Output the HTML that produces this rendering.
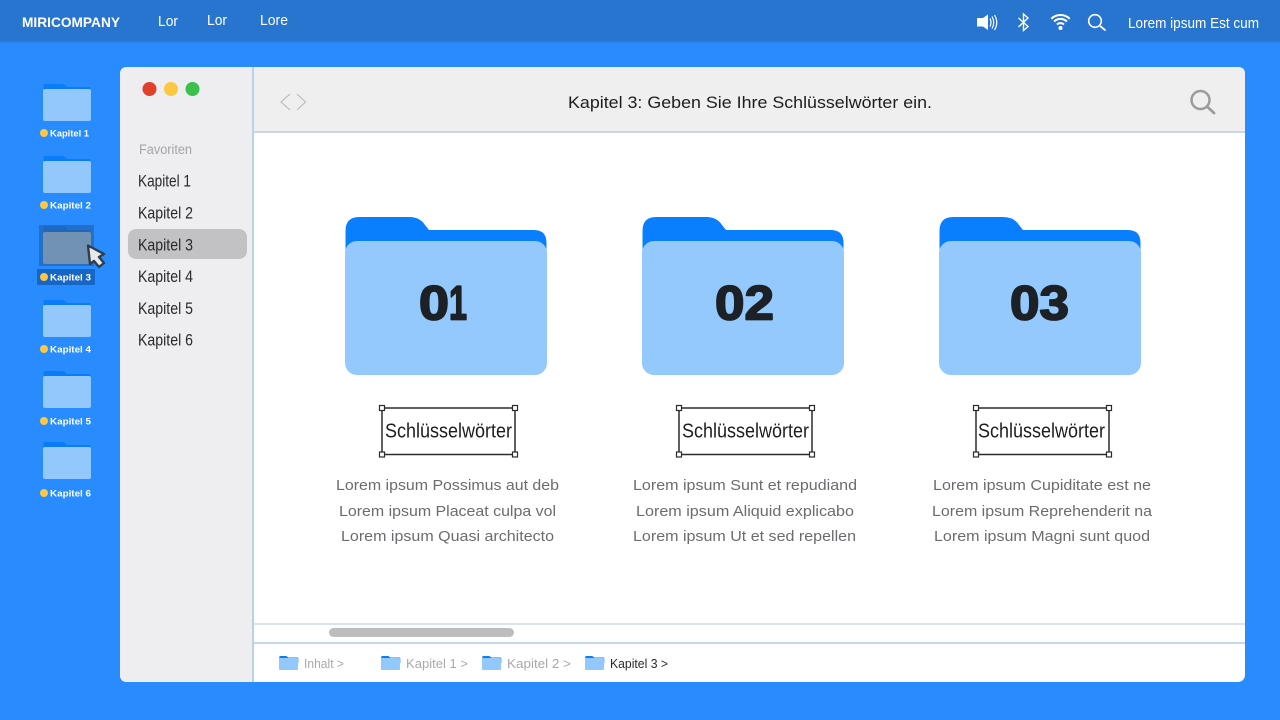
<!DOCTYPE html>
<html lang="de">
<head>
<meta charset="utf-8">
<title>Kapitel 3</title>
<style>
html,body{margin:0;padding:0;width:1280px;height:720px;overflow:hidden;background:#288cfe}
svg{display:block}
text{font-family:"Liberation Sans",sans-serif}
</style>
</head>
<body>
<svg width="1280" height="720" viewBox="0 0 1280 720" xmlns="http://www.w3.org/2000/svg">
<defs>
<g id="sf">
<path d="M0.500 12V2.500q0-1.500 1.500-1.500h17q2 0 3.500 1.500L24 4h22q1.500 0 1.500 1.500V12z" fill="#0a7cf8"/>
<rect x="0" y="6" width="48" height="32" rx="2" fill="#93c8fc"/>
</g>
<g id="mf">
<path d="M0.500 60V14Q0.500 0 14 0H64Q75 0 80 8L84 13H189Q201.500 13 201.500 26V60z" fill="#0a7ffe"/>
<rect x="0" y="24" width="202" height="134" rx="12" fill="#93c9fc"/>
</g>
<g id="tf">
<path d="M0.300 8V2q0-1 1-1h6l2 1.500h9q1 0 1 1V8z" fill="#0a7cf8"/>
<rect x="0" y="3" width="19" height="12" rx="1" fill="#93c8fc"/>
</g>
<g id="kw" fill="none">
<rect x="0" y="0" width="133" height="46.500" stroke="#2b2b2b" stroke-width="1.500"/>
<g fill="#fff" stroke="#2b2b2b" stroke-width="1.200">
<rect x="-2.500" y="-2.500" width="5" height="5"/><rect x="130.500" y="-2.500" width="5" height="5"/>
<rect x="-2.500" y="44" width="5" height="5"/><rect x="130.500" y="44" width="5" height="5"/>
</g>
</g>
</defs>

<rect width="1280" height="720" fill="#288cfe"/>
<!-- top bar -->
<rect width="1280" height="41" fill="#2875d0"/>
<rect y="41" width="1280" height="2" fill="#2681ea"/>
<text x="22" y="27" font-size="14" font-weight="700" fill="#fff" textLength="98" lengthAdjust="spacingAndGlyphs">MIRICOMPANY</text>
<text x="158" y="26" font-size="15" fill="#fff" textLength="20" lengthAdjust="spacingAndGlyphs">Lor</text>
<text x="207" y="25" font-size="15" fill="#fff" textLength="20" lengthAdjust="spacingAndGlyphs">Lor</text>
<text x="260" y="25" font-size="15" fill="#fff" textLength="28" lengthAdjust="spacingAndGlyphs">Lore</text>
<!-- status icons -->
<path d="M977 18H983L988 14.500V30L983 26.500H977z" fill="#fff"/>
<path d="M990 18.500Q992 22.500 990 26.500M992 16.500Q995.500 22.500 992 28.500M994.500 15Q999 22.500 994.500 30" fill="none" stroke="#fff" stroke-width="1.200"/>
<path d="M1018.500 18L1028 26.500L1023.500 30.500V14L1028 18L1018.500 27" fill="none" stroke="#fff" stroke-width="1.400"/>
<path d="M1051.300 18.800A13 13 0 0 1 1069.700 18.800M1054.100 21.600A9 9 0 0 1 1066.900 21.600M1057 24.500A5 5 0 0 1 1064 24.500" fill="none" stroke="#fff" stroke-width="2"/>
<circle cx="1060.500" cy="28" r="2" fill="#fff"/>
<circle cx="1095" cy="21" r="6.300" fill="none" stroke="#fff" stroke-width="1.600"/>
<path d="M1099.800 25.800L1105 30" stroke="#fff" stroke-width="1.800" stroke-linecap="round"/>
<text x="1128" y="28" font-size="15" fill="#fff" textLength="131" lengthAdjust="spacingAndGlyphs">Lorem ipsum Est cum</text>

<!-- desktop folders -->
<g font-size="9.500" font-weight="700" fill="#fff">
<use href="#sf" x="43" y="83"/><circle cx="44" cy="133" r="4" fill="#fcc741"/><text x="50" y="136.500" textLength="39" lengthAdjust="spacingAndGlyphs">Kapitel 1</text>
<use href="#sf" x="43" y="155"/><circle cx="44" cy="205" r="4" fill="#fcc741"/><text x="50" y="208.500" textLength="41" lengthAdjust="spacingAndGlyphs">Kapitel 2</text>
<rect x="39" y="225" width="55" height="41" fill="#2470c6"/>
<path d="M43.500 240V228q0-2 2-2h17q2 0 3.500 1.500L68 230h21q1.500 0 1.500 1.500V240z" fill="#1e68bf"/>
<rect x="43" y="232" width="48" height="32" rx="2" fill="#7292b4"/>
<rect x="37" y="269" width="58" height="16" fill="#1766c4"/>
<circle cx="44" cy="277" r="4" fill="#fcc741"/><text x="50" y="280.500" textLength="41" lengthAdjust="spacingAndGlyphs">Kapitel 3</text>
<use href="#sf" x="43" y="299"/><circle cx="44" cy="349" r="4" fill="#fcc741"/><text x="50" y="352.500" textLength="41" lengthAdjust="spacingAndGlyphs">Kapitel 4</text>
<use href="#sf" x="43" y="370"/><circle cx="44" cy="421" r="4" fill="#fcc741"/><text x="50" y="424.500" textLength="41" lengthAdjust="spacingAndGlyphs">Kapitel 5</text>
<use href="#sf" x="43" y="441"/><circle cx="44" cy="493" r="4" fill="#fcc741"/><text x="50" y="496.500" textLength="41" lengthAdjust="spacingAndGlyphs">Kapitel 6</text>
</g>
<!-- cursor -->
<path d="M88 245.500L104 254L99 257L104 263L99 267L94 261L90 264z" fill="#e8e8e8" stroke="#2d3e4e" stroke-width="2.400" stroke-linejoin="round"/>

<!-- window -->
<rect x="120" y="67" width="1125" height="615" rx="7" fill="#fff"/>
<path d="M252 67H127Q120 67 120 74V675Q120 682 127 682H252z" fill="#eeeef0"/>
<rect x="252" y="67" width="2" height="615" fill="#b9d1ec"/>
<path d="M254 67H1238Q1245 67 1245 74V131H254z" fill="#efefef"/>
<rect x="254" y="131" width="991" height="2" fill="#c9d6ea"/>
<circle cx="149.500" cy="89" r="7" fill="#e0402c"/>
<circle cx="171" cy="89" r="7" fill="#fcc741"/>
<circle cx="192.500" cy="89" r="7" fill="#39c14a"/>
<path d="M290 94L281 102L290 110M297 94L305.500 102L297 110" fill="none" stroke="#b5b5b5" stroke-width="1"/>
<text x="568" y="108" font-size="17" fill="#1d1d1f" textLength="364" lengthAdjust="spacingAndGlyphs">Kapitel 3: Geben Sie Ihre Schlüsselwörter ein.</text>
<circle cx="1200.500" cy="100" r="9" fill="none" stroke="#9b9b9b" stroke-width="2.500"/>
<path d="M1207 106.500L1214 113" stroke="#9b9b9b" stroke-width="2.800" stroke-linecap="round"/>

<!-- sidebar -->
<text x="139" y="154" font-size="13.500" fill="#a5a5a8" textLength="53" lengthAdjust="spacingAndGlyphs">Favoriten</text>
<rect x="128" y="229" width="119" height="30" rx="8" fill="#c2c2c4"/>
<g font-size="16.500" fill="#2a2a2d">
<text x="138" y="186.500" textLength="53" lengthAdjust="spacingAndGlyphs">Kapitel 1</text>
<text x="138" y="218.500" textLength="55" lengthAdjust="spacingAndGlyphs">Kapitel 2</text>
<text x="138" y="250.500" textLength="55" lengthAdjust="spacingAndGlyphs">Kapitel 3</text>
<text x="138" y="282" textLength="55" lengthAdjust="spacingAndGlyphs">Kapitel 4</text>
<text x="138" y="314" textLength="55" lengthAdjust="spacingAndGlyphs">Kapitel 5</text>
<text x="138" y="345.500" textLength="55" lengthAdjust="spacingAndGlyphs">Kapitel 6</text>
</g>

<!-- large folders -->
<use href="#mf" x="345" y="217"/>
<use href="#mf" x="642" y="217"/>
<use href="#mf" x="939" y="217"/>
<g font-size="48" font-weight="700" fill="#1c2126" stroke="#1c2126" stroke-width="1.800" stroke-linejoin="round">
<text x="419" y="319.500" textLength="30" lengthAdjust="spacingAndGlyphs">0</text>
<text x="449" y="319.500" textLength="18" lengthAdjust="spacingAndGlyphs">1</text>
<text x="715" y="319.500" textLength="59" lengthAdjust="spacingAndGlyphs">02</text>
<text x="1010" y="319.500" textLength="59" lengthAdjust="spacingAndGlyphs">03</text>
</g>

<!-- keyword boxes -->
<use href="#kw" x="382" y="408"/>
<use href="#kw" x="679" y="408"/>
<use href="#kw" x="976" y="408"/>
<g font-size="20" fill="#1d1d1f">
<text x="385" y="437.500" textLength="127" lengthAdjust="spacingAndGlyphs">Schlüsselwörter</text>
<text x="682" y="437.500" textLength="127" lengthAdjust="spacingAndGlyphs">Schlüsselwörter</text>
<text x="978" y="437.500" textLength="127" lengthAdjust="spacingAndGlyphs">Schlüsselwörter</text>
</g>

<!-- paragraphs -->
<g font-size="15" fill="#6c6c70">
<text x="336" y="490" textLength="223" lengthAdjust="spacingAndGlyphs">Lorem ipsum Possimus aut deb</text>
<text x="339" y="516" textLength="217" lengthAdjust="spacingAndGlyphs">Lorem ipsum Placeat culpa vol</text>
<text x="341" y="541" textLength="213" lengthAdjust="spacingAndGlyphs">Lorem ipsum Quasi architecto</text>
<text x="633" y="490" textLength="224" lengthAdjust="spacingAndGlyphs">Lorem ipsum Sunt et repudiand</text>
<text x="636" y="516" textLength="218" lengthAdjust="spacingAndGlyphs">Lorem ipsum Aliquid explicabo</text>
<text x="633" y="541" textLength="223" lengthAdjust="spacingAndGlyphs">Lorem ipsum Ut et sed repellen</text>
<text x="933" y="490" textLength="218" lengthAdjust="spacingAndGlyphs">Lorem ipsum Cupiditate est ne</text>
<text x="932" y="516" textLength="220" lengthAdjust="spacingAndGlyphs">Lorem ipsum Reprehenderit na</text>
<text x="934" y="541" textLength="216" lengthAdjust="spacingAndGlyphs">Lorem ipsum Magni sunt quod</text>
</g>

<!-- scrollbar -->
<rect x="254" y="623" width="991" height="2" fill="#dfe2e8"/>
<rect x="254" y="642" width="991" height="2" fill="#c9d6ea"/>
<rect x="329" y="628" width="185" height="9" rx="4.500" fill="#bdbdbd"/>

<!-- breadcrumb -->
<use href="#tf" x="279" y="655"/>
<use href="#tf" x="381" y="655"/>
<use href="#tf" x="482" y="655"/>
<use href="#tf" x="585" y="655"/>
<g font-size="13" fill="#a9a9ac">
<text x="304" y="668" textLength="40" lengthAdjust="spacingAndGlyphs">Inhalt &gt;</text>
<text x="406" y="668" textLength="62" lengthAdjust="spacingAndGlyphs">Kapitel 1 &gt;</text>
<text x="507" y="668" textLength="64" lengthAdjust="spacingAndGlyphs">Kapitel 2 &gt;</text>
<text x="610" y="668" textLength="58" lengthAdjust="spacingAndGlyphs" fill="#2a2a2d">Kapitel 3 &gt;</text>
</g>
</svg>
</body>
</html>
